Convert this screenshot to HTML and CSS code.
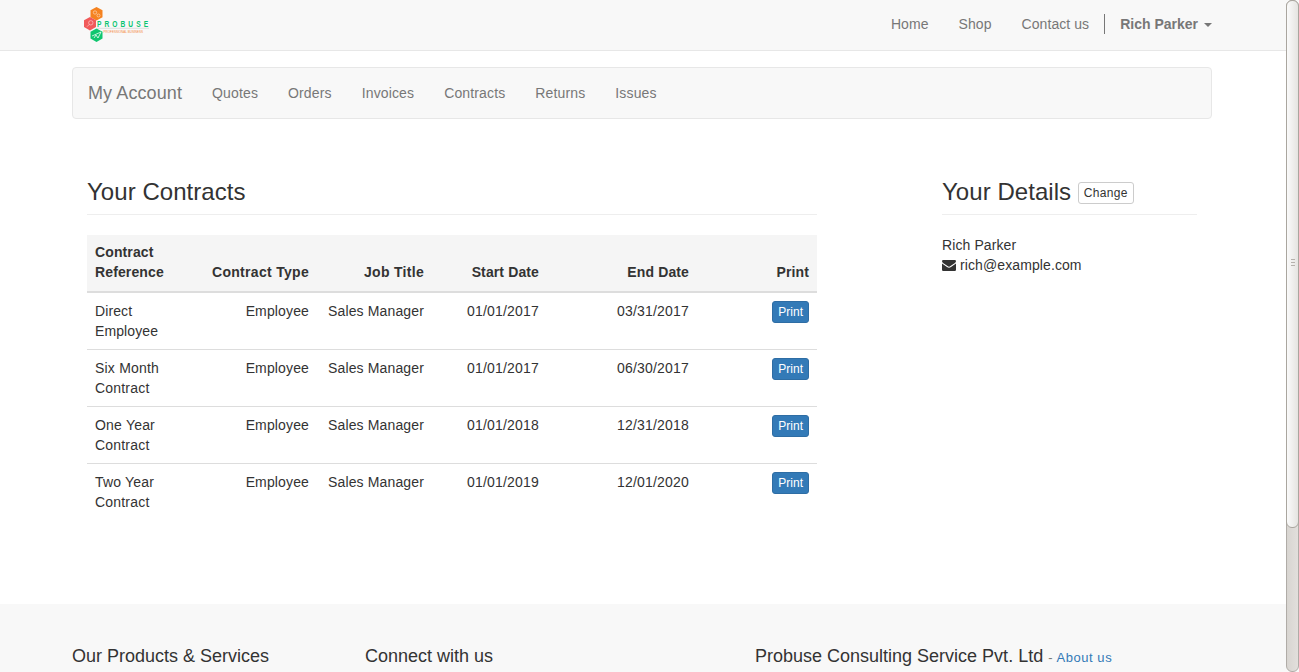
FILE: index.html
```html
<!DOCTYPE html>
<html lang="en">
<head>
<meta charset="utf-8">
<title>Your Contracts</title>
<link rel="stylesheet" href="styles.css">
</head>
<body>
<div class="page">
  <header class="topbar">
    <svg class="logo" viewBox="0 0 68 36" width="68" height="36">
      <path fill="#f58220" d="M13.500 0l6 3.200v7l-6 3.300-6-3.300v-7z"/>
      <path fill="#f15a5a" d="M7 10l6 3.300v6.800l-6 3.400-6-3.400v-6.800z"/>
      <path fill="#0fc66f" d="M13.500 21.500l6 3.200v6.800l-6 3.500-6-3.500v-6.800z"/>
      <g fill="none" stroke="#fff" stroke-opacity=".5" stroke-width=".9">
        <circle cx="12" cy="5.500" r="1.700"/><circle cx="15.500" cy="8.500" r="1.500"/>
        <circle cx="7.800" cy="15.800" r="2.200"/><path d="M6.200 17.500l-2.200 2.200"/>
      </g>
      <path fill="none" stroke="#fff" stroke-opacity=".75" d="M9 29l9-4-3 6-2-3-2 3"/>
      <path stroke="#d3d8d5" stroke-width=".8" d="M14 21.300h52"/>
      <text class="logo-name" x="20" y="19.800" textLength="73" transform="scale(.7 1)">PROBUSE</text>
      <text class="logo-tag" x="20.500" y="26" textLength="39.500" lengthAdjust="spacingAndGlyphs">PROFESSIONAL BUSINESS</text>
    </svg>
    <nav class="mainnav">
      <a>Home</a><a>Shop</a><a>Contact us</a>
      <a class="user">Rich Parker<span class="caret"></span></a>
    </nav>
  </header>

  <nav class="account">
    <a class="brand">My Account</a>
    <a>Quotes</a><a>Orders</a><a>Invoices</a><a>Contracts</a><a>Returns</a><a>Issues</a>
  </nav>

  <main class="content">
    <section class="contracts">
      <h3>Your Contracts</h3>
      <table>
        <colgroup><col class="c-ref"><col class="c-type"><col class="c-mid"><col class="c-mid"><col class="c-end"><col class="c-print"></colgroup>
        <thead>
          <tr><th>Contract Reference</th><th>Contract Type</th><th>Job Title</th><th>Start Date</th><th>End Date</th><th>Print</th></tr>
        </thead>
        <tbody>
          <tr><td>Direct<br>Employee</td><td>Employee</td><td>Sales Manager</td><td>01/01/2017</td><td>03/31/2017</td><td><a class="btn primary">Print</a></td></tr>
          <tr><td>Six Month<br>Contract</td><td>Employee</td><td>Sales Manager</td><td>01/01/2017</td><td>06/30/2017</td><td><a class="btn primary">Print</a></td></tr>
          <tr><td>One Year<br>Contract</td><td>Employee</td><td>Sales Manager</td><td>01/01/2018</td><td>12/31/2018</td><td><a class="btn primary">Print</a></td></tr>
          <tr><td>Two Year<br>Contract</td><td>Employee</td><td>Sales Manager</td><td>01/01/2019</td><td>12/01/2020</td><td><a class="btn primary">Print</a></td></tr>
        </tbody>
      </table>
    </section>
    <aside class="details">
      <h3>Your Details <a class="btn">Change</a></h3>
      <div>Rich Parker</div>
      <div class="mail">
        <svg viewBox="0 0 14 11" width="14" height="11"><path fill="#333" d="M1.200 0h11.600Q14 0 14 1.200 14 2.200 12.600 3.200L8.500 6.100Q7 7.300 5.500 6.100L1.400 3.200Q0 2.200 0 1.200 0 0 1.200 0zM0 3.400l5 3.500q2 1.500 4 0l5-3.500v6.400q0 1.200-1.200 1.200H1.200Q0 11 0 9.800z"/></svg>
        <span>rich@example.com</span>
      </div>
    </aside>
  </main>

  <footer class="footer">
    <h4 class="products">Our Products &amp; Services</h4>
    <h4 class="connect">Connect with us</h4>
    <h4>Probuse Consulting Service Pvt. Ltd <small>- <a>About us</a></small></h4>
  </footer>
</div>
<div class="scrollbar"><div class="thumb"><i></i><i></i><i></i></div></div>
</body>
</html>
```
FILE: styles.css
```css
* { box-sizing: border-box; }
body {
  margin: 0;
  height: 672px;
  overflow: hidden;
  display: flex;
  background: #f8f8f8;
  color: #333;
  font: 14px/20px "Liberation Sans", Arial, sans-serif;
}
.page {
  width: 1286px;
  height: 672px;
  display: flex;
  flex-direction: column;
  background: #fff;
}
.topbar {
  height: 51px;
  flex: none;
  display: flex;
  justify-content: space-between;
  align-items: flex-start;
  padding: 7px 74px 0 83px;
  background: #f8f8f8;
  border-bottom: 1px solid #e7e7e7;
}
.logo { overflow: visible; }
.logo-name { font: bold 9.500px "Liberation Sans", Arial, sans-serif; fill: #0cc472; }
.logo-tag { font: 4px "Liberation Sans", Arial, sans-serif; fill: #f58a3c; }
.mainnav { display: flex; padding-top: 7px; gap: 30px; color: #777; letter-spacing: .07px; }
.mainnav .user {
  display: flex;
  align-items: center;
  margin-left: -15px;
  padding-left: 15px;
  border-left: 1px solid #777;
  font-weight: bold;
  letter-spacing: 0;
}
.caret {
  margin: 2px 0 0 6px;
  border: 4px solid transparent;
  border-top-color: #777;
  border-bottom: 0;
}
.account {
  width: 1140px;
  height: 52px;
  flex: none;
  display: flex;
  align-items: center;
  gap: 30px;
  margin: 16px 0 0 72px;
  padding: 0 15px;
  background: #f8f8f8;
  border: 1px solid #e7e7e7;
  border-radius: 4px;
  color: #777;
  letter-spacing: .14px;
}
.brand { font-size: 18px; letter-spacing: .1px; }
.content { height: 485px; flex: none; display: flex; padding: 60px 0 0 87px; }
.contracts { width: 730px; margin-right: 125px; }
.details { width: 255px; letter-spacing: .1px; }
h3, h4 { margin: 0; font-weight: normal; }
h3 {
  height: 36px;
  margin-bottom: 20px;
  font-size: 24px;
  line-height: 26px;
  letter-spacing: .05px;
  border-bottom: 1px solid #eee;
}
.btn {
  display: inline-block;
  height: 22px;
  padding: 1px 5px;
  border: 1px solid #ccc;
  border-radius: 3px;
  background: #fff;
  font-size: 12px;
  line-height: 18px;
  letter-spacing: .3px;
  vertical-align: 3px;
}
.btn.primary { color: #fff; background: #337ab7; border-color: #2e6da4; vertical-align: top; letter-spacing: 0; }
table { width: 730px; table-layout: fixed; border-collapse: collapse; }
.c-ref { width: 115px; }
.c-type { width: 115px; }
.c-mid { width: 115px; }
.c-end { width: 150px; }
.c-print { width: 120px; }
th, td { padding: 8px; text-align: right; }
th:first-child, td:first-child { text-align: left; }
th {
  height: 57px;
  padding: 7px 8px 9px;
  vertical-align: bottom;
  letter-spacing: .12px;
  background: #f5f5f5;
  border-bottom: 2px solid #ddd;
}
th:nth-child(2) { letter-spacing: .3px; }
th:nth-child(3) { letter-spacing: .3px; }
td { height: 57px; vertical-align: top; border-top: 1px solid #ddd; letter-spacing: .14px; }
td:first-child { letter-spacing: .2px; }
tr:first-child td:first-child { letter-spacing: .1px; }
td:nth-child(4), td:nth-child(5) { letter-spacing: .2px; }
.mail { display: flex; align-items: center; gap: 4px; }
.footer { flex: 1; display: flex; padding: 42px 0 0 72px; background: #f8f8f8; }
h4 { font-size: 18px; line-height: 20px; white-space: nowrap; }
.products { width: 293px; }
.connect { width: 390px; }
small { font-size: 13px; color: #777; letter-spacing: .55px; }
small a { color: #337ab7; }
.scrollbar {
  width: 13px;
  height: 672px;
  border: 1px solid #b0aca7;
  border-radius: 6px;
  background: linear-gradient(90deg, #d8d5d1, #e2dfdc);
}
.thumb {
  width: 13px;
  height: 528px;
  margin: -1px;
  padding-bottom: 3px;
  display: flex;
  flex-direction: column;
  align-items: center;
  justify-content: center;
  gap: 2px;
  border: 1px solid #aaa69f;
  border-radius: 6px;
  background: linear-gradient(90deg, #fafafa, #e5e4e1);
}
.thumb i { width: 4px; height: 1px; background: #b5b1ac; }
```
